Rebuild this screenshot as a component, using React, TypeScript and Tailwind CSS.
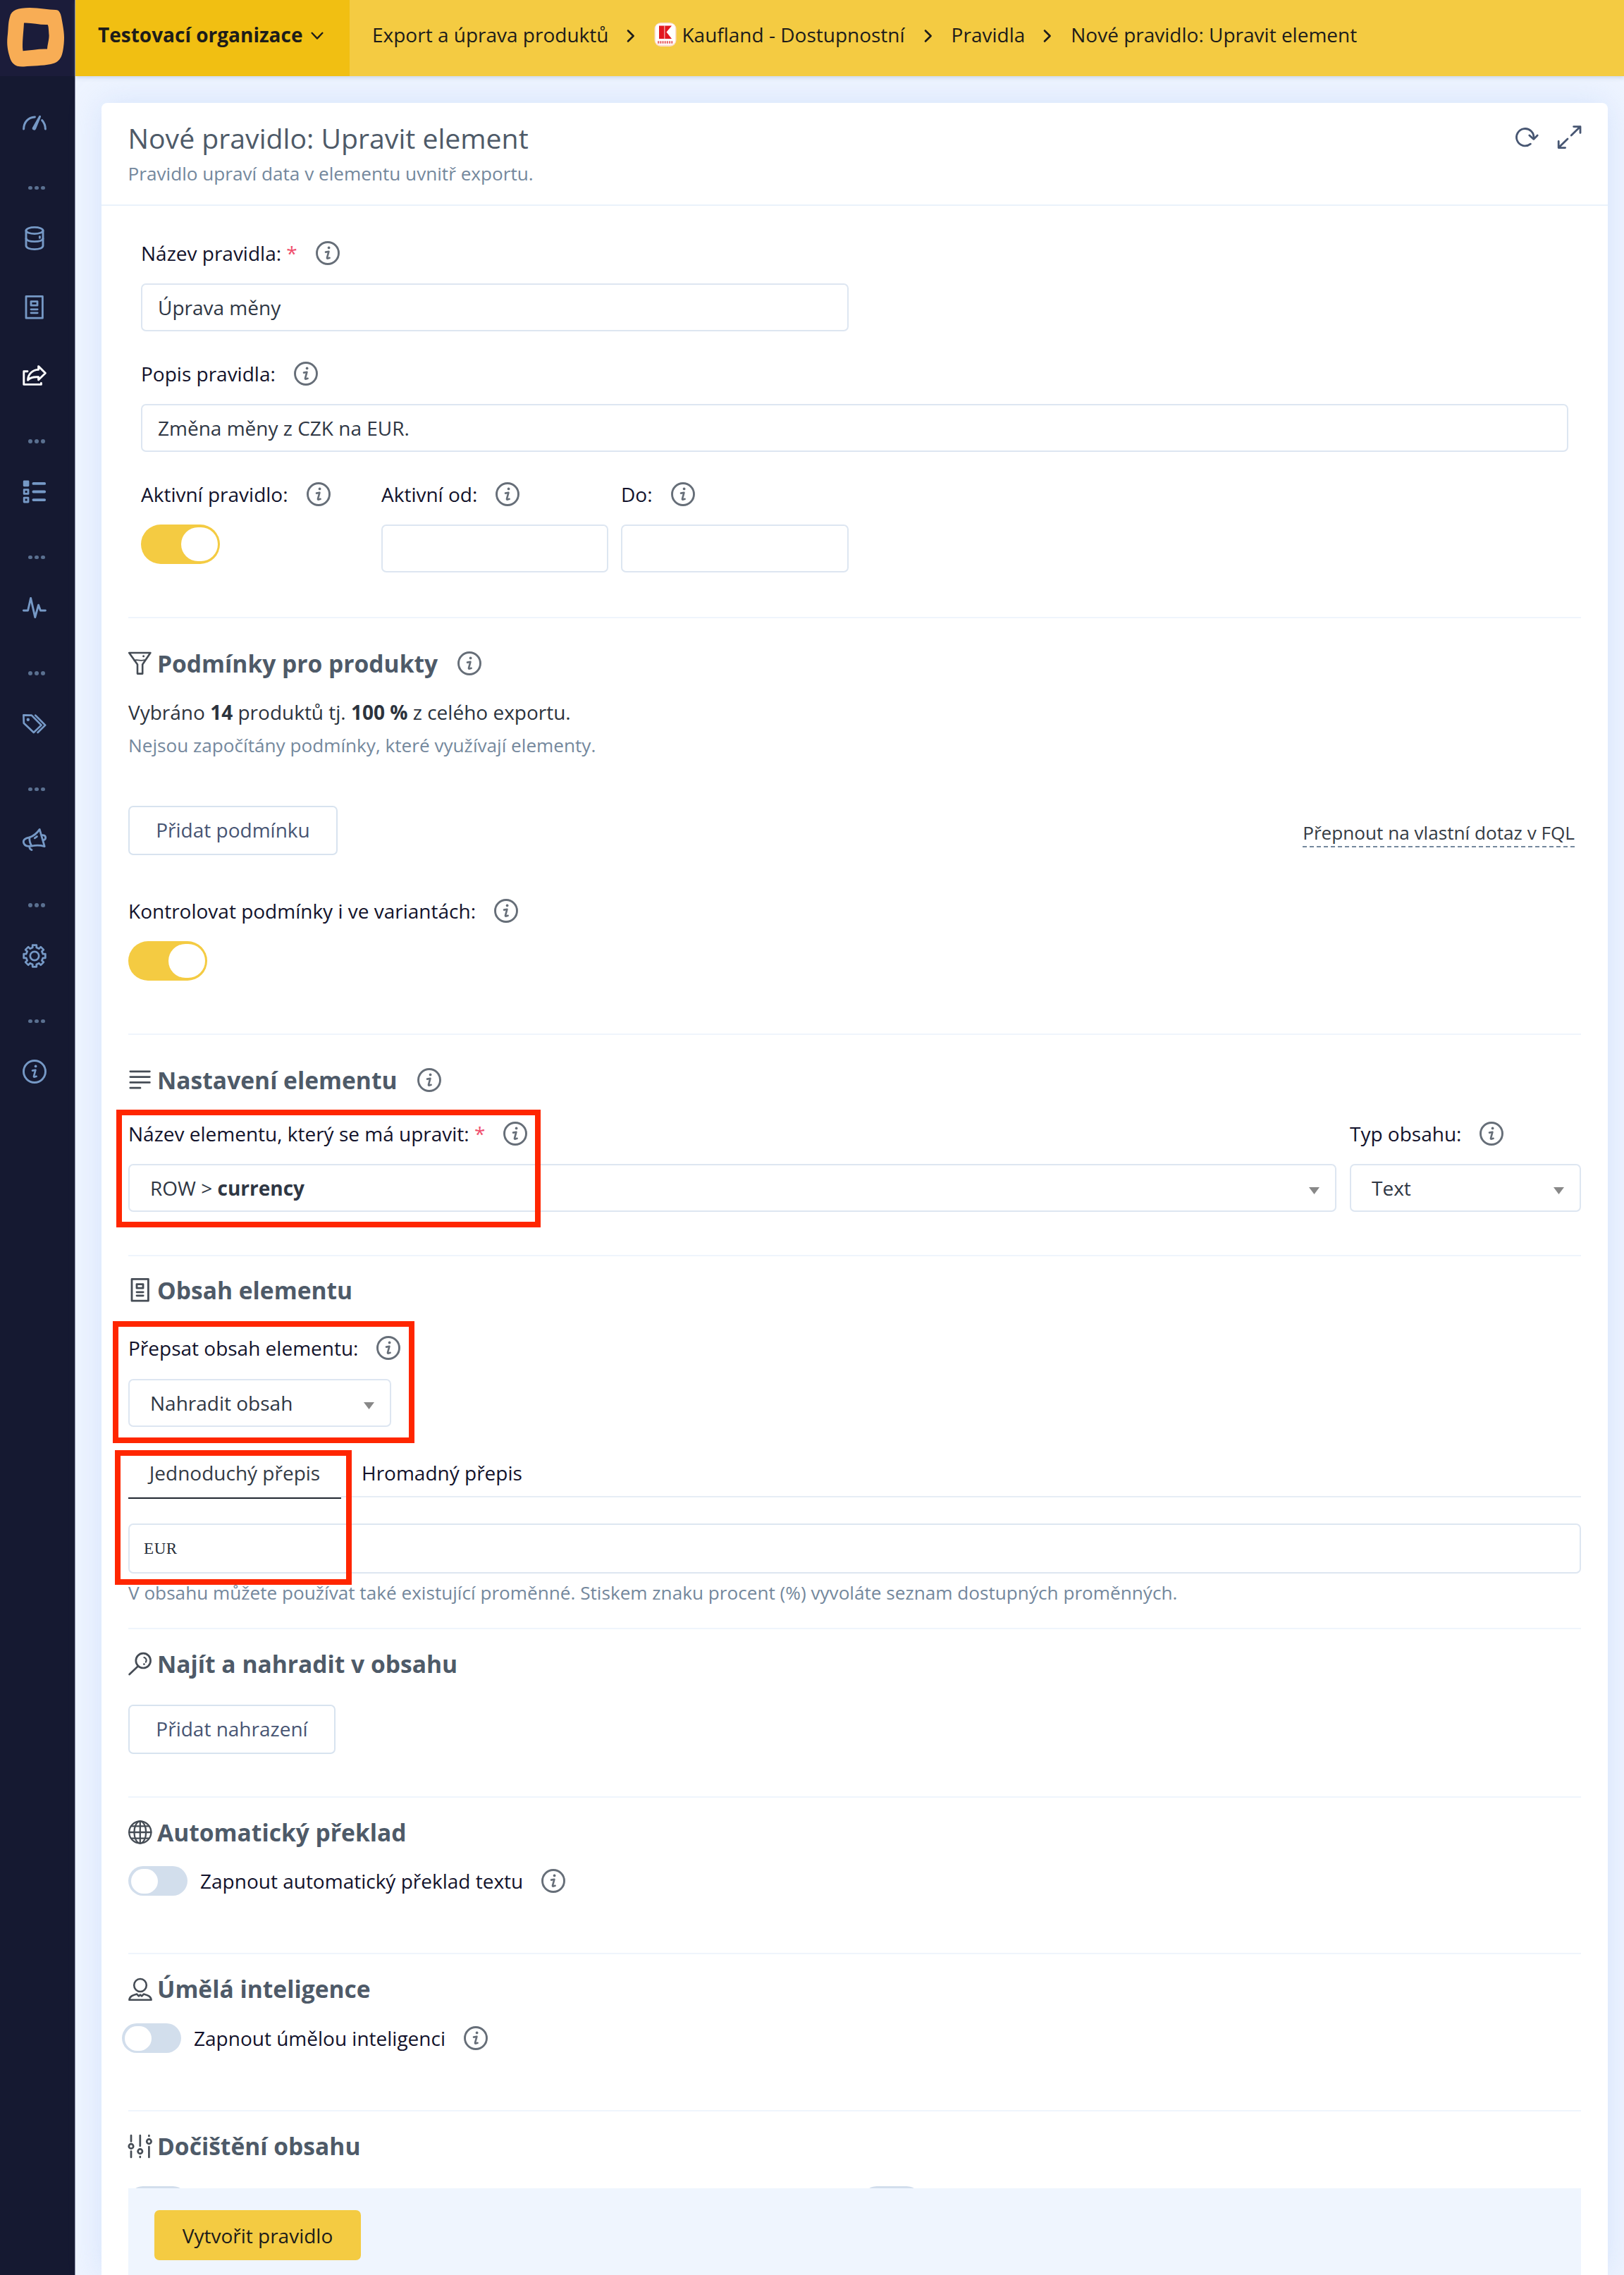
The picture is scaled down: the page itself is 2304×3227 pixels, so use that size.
import type { ReactNode } from 'react';

/* ---------- Icons ---------- */

function Icon({ children, className = '', width = 2.6 }: { children: ReactNode; className?: string; width?: number }) {
  return (
    <svg
      viewBox="0 0 34 34"
      className={'h-[34px] w-[34px] shrink-0 overflow-visible ' + className}
      fill="none"
      stroke="currentColor"
      strokeWidth={width}
      strokeLinecap="round"
      strokeLinejoin="round"
    >
      {children}
    </svg>
  );
}

function InfoIcon({ className = 'text-[#666e78]' }: { className?: string }) {
  return (
    <Icon className={className} width={2.9}>
      <circle cx="17" cy="17" r="15.5" />
      <circle cx="18.6" cy="9.4" r="1.9" fill="currentColor" stroke="none" />
      <path d="M14 15.6 L18.4 14.8 L16 23.6 Q15.8 25 17.2 24.6 L19.6 23.8" strokeWidth="2.6" />
    </Icon>
  );
}

const GaugeIcon = () => (
  <Icon width={3}>
    <path d="M1.6 26 C1.8 16.5 8 9.4 17.4 8.9" />
    <path d="M27.6 13.6 C30.6 17 32.3 21 32.4 26" />
    <path d="M24.6 8.2 L17.6 25.4 A1.2 1.2 0 0 1 15.4 24.4 Z" />
  </Icon>
);

const DatabaseIcon = () => (
  <Icon width={2.9}>
    <ellipse cx="17" cy="6" rx="12" ry="4.6" />
    <path d="M5 6 V27.6 C5 30.6 10 32.6 17 32.6 S29 30.6 29 27.6 V6" />
    <path d="M5 17.4 C6 20.2 11 21.6 17 21.6 S28 20.2 29 17.4" />
    <path d="M24.4 14.6 V16.4" />
  </Icon>
);

const DocIcon = () => (
  <Icon width={2.8}>
    <rect x="5" y="1.4" width="23.4" height="30.8" />
    <rect x="12" y="8.6" width="9" height="5.6" />
    <path d="M12 19.8 H21.2 M12 24.8 H21.2" />
  </Icon>
);

const ShareIcon = () => (
  <Icon width={2.9}>
    <path d="M7 10.8 H1.8 V29.4 H26.4 V27.4" />
    <path d="M22.6 3.6 L32.4 13.2 L22.6 22.8 V18.8 C16 18.4 10.6 19.4 7.6 23.2 C7.6 15 14 8.6 22.6 8.4 Z" />
  </Icon>
);

const ListIcon = () => (
  <Icon width={2.8}>
    <rect x="2.2" y="2" width="5.8" height="5.8" fill="currentColor" />
    <rect x="2.2" y="13.6" width="5.8" height="5.8" />
    <rect x="2.2" y="25.2" width="5.8" height="5.8" />
    <path d="M15.4 4.9 H31.2 M15.4 16.5 H31.2 M15.4 28.1 H31.2" strokeWidth="3.8" />
  </Icon>
);

const PulseIcon = () => (
  <Icon width={2.9}>
    <path d="M1.4 21 H7.6 L11.6 3.4 L17.8 30.6 L22.6 13.2 L25.4 21 H32.4" />
  </Icon>
);

const TagsIcon = () => (
  <Icon width={2.7}>
    <path d="M1.4 4.4 L12.8 4.6 L26.6 18.6 L15.8 29 L1.8 15.8 Z" />
    <path d="M18.2 4.6 L32.2 18.6 L21.6 29" />
    <circle cx="7.8" cy="10.8" r="2.2" fill="currentColor" stroke="none" />
  </Icon>
);

const MegaphoneIcon = () => (
  <Icon width={2.8}>
    <path d="M24.2 2.4 L31.2 26.6 C25 24.8 19 24.8 13 26 C6.5 27.2 3 25.6 1.6 21.8 C.4 18 3 15 9.8 13.8 C15.6 12 20.4 8 24.2 2.4 Z" />
    <path d="M9.8 13.8 C9.6 18 10.6 22.4 13 26" />
    <path d="M27.6 10.6 C33.6 10 34.4 16.4 29.4 17.8" />
    <path d="M9.8 27 C9.8 29 11 31 13 31.6" />
    <path d="M17.2 14.8 L20.4 12.6" />
  </Icon>
);

// outline of an eight-toothed wheel around (17, 17)
const gearPath =
  Array.from({ length: 8 }, (_, i) => {
    const steps: [number, number][] = [[-13, 12.2], [-10.5, 15.6], [10.5, 15.6], [13, 12.2]];
    return steps
      .map(([deg, r], j) => {
        const a = ((i * 45 + deg) * Math.PI) / 180;
        return (i + j === 0 ? 'M' : 'L') + (17 + r * Math.sin(a)).toFixed(2) + ' ' + (17 - r * Math.cos(a)).toFixed(2);
      })
      .join(' ');
  }).join(' ') + ' Z';

const GearIcon = () => (
  <Icon width={2.7}>
    <path d={gearPath} />
    <circle cx="17" cy="17" r="6.2" />
  </Icon>
);

const FunnelIcon = () => (
  <Icon width={2.6}>
    <path d="M1.2 2 H31.4 L20.2 18.6 V31.6 H13 V18.6 Z" />
    <path d="M8.4 13 C12 10.4 14.6 14.4 23.2 12.2" strokeWidth="1.9" />
    <circle cx="21.6" cy="6.8" r="1.5" fill="currentColor" stroke="none" />
  </Icon>
);

const LinesIcon = () => (
  <Icon width={2.7}>
    <path d="M2.8 4.8 H30.4 M2.8 12.6 H30.4 M2.8 20.4 H30.4 M2.8 28.2 H17" />
  </Icon>
);

const SearchIcon = () => (
  <Icon width={2.7}>
    <circle cx="21.2" cy="12.6" r="10.4" />
    <path d="M14 20.2 L1.6 32" />
    <path d="M22.4 8 C25.4 9 26.6 12 24.8 14.6" strokeWidth="2.1" />
    <circle cx="22.4" cy="17.6" r="1.4" fill="currentColor" stroke="none" />
  </Icon>
);

const GlobeIcon = () => (
  <Icon width={2.3}>
    <circle cx="16.8" cy="17" r="15.6" />
    <path d="M16.8 1.4 V32.6 M1.2 17 H32.4 M4.4 8.4 H29.2 M4.4 25.6 H29.2" />
    <ellipse cx="16.8" cy="17" rx="8.4" ry="15.6" />
  </Icon>
);

const UserIcon = () => (
  <Icon width={2.6}>
    <ellipse cx="17" cy="12" rx="8.8" ry="9" />
    <path d="M12.2 24.6 C7 26 2 27.4 1.4 32.8 H32.6 C32 27.4 27 26 21.8 24.6 L19.2 27.4 L17 25.6 L14.8 27.4 Z" />
  </Icon>
);

const SlidersIcon = () => (
  <Icon width={2.7}>
    <path d="M4 2 V10.4 M4 24.6 V33 M16.8 2 V17 M16.8 32 V33 M29.4 2 V3 M29.4 18.2 V33" />
    <circle cx="4" cy="17.4" r="3.2" />
    <circle cx="16.8" cy="24.6" r="3.2" />
    <circle cx="29.4" cy="10.6" r="3.2" />
  </Icon>
);

const Chevron = ({ className = '' }: { className?: string }) => (
  <svg viewBox="0 0 12 20" className={'h-5 w-3 shrink-0 ' + className} fill="none" stroke="currentColor" strokeWidth="2.6" strokeLinecap="round" strokeLinejoin="round">
    <path d="M2 2.5 L9.6 10 L2 17.5" />
  </svg>
);

/* ---------- Form parts ---------- */

function Label({ text, required, className = '' }: { text: string; required?: boolean; className?: string }) {
  return (
    <div className={'flex h-10 items-center whitespace-nowrap text-[#12122b] ' + className}>
      <span>
        {text}
        {required && <span className="text-[#f0506e]"> *</span>}
      </span>
      <span className="ml-[26px] flex"><InfoIcon /></span>
    </div>
  );
}

function Heading({ icon, text, info, className = '' }: { icon: ReactNode; text: string; info?: boolean; className?: string }) {
  return (
    <div className={'flex h-[46px] items-center ' + className}>
      <span className="mr-[7px] flex text-[#454c55]">{icon}</span>
      <h3 className="text-[33.6px] leading-[46px] font-bold text-[#4e5a68]">{text}</h3>
      {info && <span className="ml-7 flex"><InfoIcon /></span>}
    </div>
  );
}

function Field({ value = '', className = '' }: { value?: string; className?: string }) {
  return (
    <div className={'flex h-[68px] items-center rounded-[7px] border-2 border-[#dde6f1] bg-white pl-[22px] text-[#2f3744] ' + className}>
      {value}
    </div>
  );
}

function Select({ children, className = '' }: { children: ReactNode; className?: string }) {
  return (
    <div className={'flex h-[68px] items-center justify-between rounded-[7px] border-2 border-[#dde6f1] bg-white pr-[22px] pl-[29px] text-[#2f3744] ' + className}>
      <span>{children}</span>
      <svg viewBox="0 0 15 10" className="mt-2 h-2.5 w-[15px] fill-[#888888]">
        <path d="M0 0 H15 L7.5 10 Z" />
      </svg>
    </div>
  );
}

function ToggleOn({ className = '' }: { className?: string }) {
  return (
    <div className={'flex h-14 w-28 items-center justify-end rounded-full bg-[#f4cb42] pr-[3px] ' + className}>
      <span className="h-12 w-[52px] rounded-full bg-white" />
    </div>
  );
}

function ToggleOff() {
  return (
    <div className="flex h-[42px] w-[84px] shrink-0 items-center rounded-full bg-[#d2deec] pl-1">
      <span className="h-[35px] w-[38px] rounded-full bg-white" />
    </div>
  );
}

const Divider = ({ className = '' }: { className?: string }) => <div className={'h-0.5 bg-[#eff5fc] ' + className} />;

/* ---------- Layout ---------- */

const Dots = () => (
  <div className="flex h-[67px] items-center gap-[3.6px] pt-[21px] pl-[40px]">
    <span className="h-[5.6px] w-[5.6px] rounded-full bg-[#5a7090]" />
    <span className="h-[5.6px] w-[5.6px] rounded-full bg-[#5a7090]" />
    <span className="h-[5.6px] w-[5.6px] rounded-full bg-[#5a7090]" />
  </div>
);

const NavItem = ({ children, active }: { children: ReactNode; active?: boolean }) => (
  <div className={'flex h-[97.5px] items-center pl-8 ' + (active ? 'text-white' : 'text-[#7699c6]')}>{children}</div>
);

function Sidebar() {
  return (
    <aside className="w-[107px] shrink-0 border-r border-[#8f93ab] bg-[#151931]">
      <div className="h-[108px] bg-[#1b1c3a]">
        <svg viewBox="0 0 106 108" className="h-[108px] w-[106px]">
          <path
            fill="#f8ad55"
            fillRule="evenodd"
            d="M14 24 C16 14 26 11 42 11 C56 11 68 14 79 14 C84 14 86 19 87 24 C90 40 92 50 90.600 62 C89 76 88 88 72 91 C60 93.500 46 93 34 94.500 C22 95.500 16 90 13.500 80 C10 68 9.500 60 11 48 C12 38 11.500 32 14 24 Z M34 32.600 C45 32 56 35.500 67.500 35 C69 36 69 44 69.600 50 C69.600 57 67.500 62 67 69.500 C55 69 43 71.500 32.500 72.300 C31 62 33.500 45 34 32.600 Z"
          />
        </svg>
      </div>
      <nav className="pt-[17px]">
        <NavItem><GaugeIcon /></NavItem>
        <Dots />
        <NavItem><DatabaseIcon /></NavItem>
        <NavItem><DocIcon /></NavItem>
        <NavItem active><ShareIcon /></NavItem>
        <Dots />
        <NavItem><ListIcon /></NavItem>
        <Dots />
        <NavItem><PulseIcon /></NavItem>
        <Dots />
        <NavItem><TagsIcon /></NavItem>
        <Dots />
        <NavItem><MegaphoneIcon /></NavItem>
        <Dots />
        <NavItem><GearIcon /></NavItem>
        <Dots />
        <NavItem><InfoIcon className="text-[#7699c6]" /></NavItem>
      </nav>
    </aside>
  );
}

function TopBar() {
  return (
    <header className="relative flex h-[108px] bg-[#f4cb42] whitespace-nowrap text-[#1d1c1a] shadow-[0_2px_6px_rgba(120,140,170,0.3)]">
      <div className="flex h-[108px] w-[389px] items-center bg-[#f1bf12] pb-2.5 pl-8">
        <span className="w-[290px] font-bold">Testovací organizace</span>
        <svg viewBox="0 0 18 12" className="mt-1 ml-3 h-3 w-[18px]" fill="none" stroke="currentColor" strokeWidth="2.3" strokeLinecap="round" strokeLinejoin="round">
          <path d="M1.600 1.800 L9 9.600 L16.400 1.800" />
        </svg>
      </div>
      <div className="flex h-[108px] items-center pb-2.5 pl-8">
        <span>Export a úprava produktů</span>
        <Chevron className="mt-1 ml-[26px]" />
        <svg viewBox="0 0 32 36" className="ml-[27px] h-9 w-8">
          <rect x="0.500" y="1" width="31" height="34" rx="9" fill="#fbdccb" />
          <rect x="2" y="2.500" width="28" height="30" rx="6" fill="#ffffff" />
          <path d="M7 5.500 H25 L17.500 14.500 L25 24 H7 Z" fill="#e2181f" />
          <path d="M14.800 5 V24.500" stroke="#f6b9ba" strokeWidth="1.200" />
          <path d="M5 29 H27" stroke="#ea6a6c" strokeWidth="3.600" strokeDasharray="2.200 1" />
        </svg>
        <span className="ml-[7px]">Kaufland - Dostupnostní</span>
        <Chevron className="mt-1 ml-[27px]" />
        <span className="ml-[27px]">Pravidla</span>
        <Chevron className="mt-1 ml-[26px]" />
        <span className="ml-[27px]">Nové pravidlo: Upravit element</span>
      </div>
    </header>
  );
}

function CardHeader() {
  return (
    <div className="flex h-[146px] justify-between border-b-2 border-[#eaf2fb] pr-[37px] pl-[37.5px] pt-[26px]">
      <div>
        <h1 className="text-[39.2px] leading-[48px] text-[#4e5a68]">Nové pravidlo: Upravit element</h1>
        <p className="mt-2 text-[26.17px] leading-9 text-[#74889d]">Pravidlo upraví data v elementu uvnitř exportu.</p>
      </div>
      <div className="flex gap-[26px] pt-1.5 text-[#475672]">
        <Icon width={2.8}>
          <path d="M21.400 26.200 A12.200 12.200 0 1 1 25.800 18.400" />
          <path d="M19.800 14 L25.800 19.400 L31.200 14" />
        </Icon>
        <Icon width={2.8}>
          <path d="M19.200 14 L32 1.600 M22.600 1.600 H32 V10.400" />
          <path d="M14 19 L1.200 31.600 M1.200 22.400 V31.600 H10.600" />
        </Icon>
      </div>
    </div>
  );
}

export default function App() {
  return (
    <div className="flex h-[3227px] w-[2304px] overflow-hidden bg-[#eef4ff] font-['Open_Sans',sans-serif] text-[28px] leading-10">
      <Sidebar />
      <div className="flex-1">
        <TopBar />
        <main className="mt-[38px] ml-[37px] h-[3081px] w-[2137px] rounded-t-[8px] bg-white shadow-[0_0_44px_rgba(170,200,245,0.38)]">
          <CardHeader />

          <div className="h-[2812px] overflow-hidden px-[38px]">
            {/* Basic settings */}
            <section className="pl-[18px]">
              <Label text="Název pravidla:" required className="mt-[47px]" />
              <Field value="Úprava měny" className="mt-[23px] w-[1004px]" />
              <Label text="Popis pravidla:" className="mt-10" />
              <Field value="Změna měny z CZK na EUR." className="mt-[23px] w-[2025px]" />
              <div className="mt-10 flex">
                <div className="w-[341px]">
                  <Label text="Aktivní pravidlo:" />
                  <ToggleOn className="mt-[23px]" />
                </div>
                <div className="w-[340px]">
                  <Label text="Aktivní od:" />
                  <Field className="mt-[23px] w-[322px]" />
                </div>
                <div>
                  <Label text="Do:" />
                  <Field className="mt-[23px] w-[323px]" />
                </div>
              </div>
            </section>

            <Divider className="mt-[63px]" />

            {/* Product conditions */}
            <section>
              <Heading icon={<FunnelIcon />} text="Podmínky pro produkty" info className="mt-[41px]" />
              <p className="mt-[26px] text-[#2c333d]">
                Vybráno <b>14</b> produktů tj. <b>100 %</b> z celého exportu.
              </p>
              <p className="mt-[9px] text-[26.17px] leading-9 text-[#74889d]">
                Nejsou započítány podmínky, které využívají elementy.
              </p>
              <div className="mt-[68px] flex h-[70px] justify-between">
                <button className="h-[70px] w-[297px] rounded-[7px] border-2 border-[#d8e3ef] pb-[3px] text-[#475573]">Přidat podmínku</button>
                <a className="mt-5 mr-[9px] h-[39px] border-b-2 border-dashed border-[#74889d] text-[26.17px] leading-9 text-[#353b44]">
                  Přepnout na vlastní dotaz v FQL
                </a>
              </div>
              <Label text="Kontrolovat podmínky i ve variantách:" className="mt-[59px]" />
              <ToggleOn className="mt-[23px]" />
            </section>

            <Divider className="mt-[75px]" />

            {/* Element settings */}
            <section>
              <Heading icon={<LinesIcon />} text="Nastavení elementu" info className="mt-[41px]" />
              <div className="relative mt-[33px] flex gap-[19px]">
                <div className="w-[1714px]">
                  <Label text="Název elementu, který se má upravit:" required />
                  <Select className="mt-[23px]">
                    ROW &gt; <b>currency</b>
                  </Select>
                </div>
                <div className="flex-1">
                  <Label text="Typ obsahu:" />
                  <Select className="mt-[23px]">Text</Select>
                </div>
                <div className="absolute -top-[14px] -left-[17px] h-[167px] w-[602px] border-8 border-[#ff2600]" />
              </div>
            </section>

            <Divider className="mt-[61px]" />

            {/* Element content */}
            <section>
              <Heading icon={<DocIcon />} text="Obsah elementu" className="mt-[25px]" />
              <div className="relative mt-[39px]">
                <Label text="Přepsat obsah elementu:" />
                <Select className="mt-6 w-[373px]">Nahradit obsah</Select>
                <div className="absolute -top-[18px] -left-[22px] h-[173px] w-[428px] border-8 border-[#ff2600]" />
              </div>
              <div className="relative mt-[45px]">
                <div className="flex h-[57px]">
                  <div className="h-[57px] w-[302px] border-b-2 border-[#20262f] text-center text-[#343b46]">Jednoduchý přepis</div>
                  <div className="h-[55px] flex-1 border-b-2 border-[#e6edf5] pl-[29px] text-[#12122b]">Hromadný přepis</div>
                </div>
                <div className="mt-[35px] flex h-[71px] items-center rounded-[7px] border-2 border-[#dde6f1] pl-5 font-['Liberation_Serif',serif] text-[23px] tracking-[0.6px] text-[#262d38]">
                  EUR
                </div>
                <p className="mt-[9px] text-[26.17px] leading-9 text-[#74889d]">
                  V obsahu můžete používat také existující proměnné. Stiskem znaku procent (%) vyvoláte seznam dostupných proměnných.
                </p>
                <div className="absolute -top-3 -left-[19px] h-[191px] w-[336px] border-8 border-[#ff2600]" />
              </div>
            </section>

            <Divider className="mt-8" />

            {/* Find and replace */}
            <section>
              <Heading icon={<SearchIcon />} text="Najít a nahradit v obsahu" className="mt-[26px]" />
              <button className="mt-[35px] block h-[70px] w-[294px] rounded-[7px] border-2 border-[#d8e3ef] pb-[3px] text-[#475573]">Přidat nahrazení</button>
            </section>

            <Divider className="mt-[60px]" />

            {/* Translation */}
            <section>
              <Heading icon={<GlobeIcon />} text="Automatický překlad" className="mt-[26px]" />
              <div className="mt-[25px] flex h-[42px] items-center gap-[18px]">
                <ToggleOff />
                <Label text="Zapnout automatický překlad textu" />
              </div>
            </section>

            <Divider className="mt-[81px]" />

            {/* AI */}
            <section>
              <Heading icon={<UserIcon />} text="Úmělá inteligence" className="mt-[26px]" />
              <div className="mt-[26px] -ml-[9px] flex h-[42px] items-center gap-[18px]">
                <ToggleOff />
                <Label text="Zapnout úmělou inteligenci" />
              </div>
            </section>

            <Divider className="mt-[81px]" />

            {/* Cleanup, continues under the action bar */}
            <section>
              <Heading icon={<SlidersIcon />} text="Dočištění obsahu" className="mt-[26px]" />
              <div className="mt-[34px] grid grid-cols-[1041px_1fr]">
                <ToggleOff />
                <ToggleOff />
              </div>
            </section>
          </div>

          <div className="mx-[38px] h-[123px] bg-[#eff5fe] pt-[31px] pl-[37px]">
            <button className="h-[71px] w-[293px] rounded-[7px] bg-[#f4cb42] text-[#1d1c1a]">Vytvořit pravidlo</button>
          </div>
        </main>
      </div>
    </div>
  );
}
